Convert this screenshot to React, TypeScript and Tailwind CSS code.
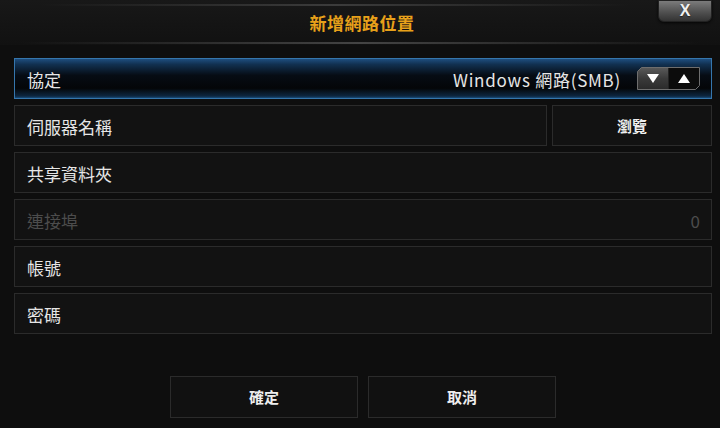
import React from "react";

const font = { fontFamily: '"Noto Sans CJK TC", "Noto Sans", sans-serif' };

function Spinner() {
  return (
    <svg width="63" height="23" viewBox="0 0 63 23">
      <defs>
        <linearGradient id="lg" x1="0" y1="0" x2="0" y2="1">
          <stop offset="0" stopColor="#5a5a5a" />
          <stop offset="0.5" stopColor="#3a3a3a" />
          <stop offset="1" stopColor="#2a2a2a" />
        </linearGradient>
      </defs>
      <polygon points="4.5,0.5 31.5,0.5 31.5,22.5 0.5,22.5 0.5,4.5" fill="url(#lg)" />
      <polygon points="31.5,0.5 62.5,0.5 62.5,18.5 58.5,22.5 31.5,22.5" fill="#0c0c0c" />
      <polygon
        points="4.5,0.5 62.5,0.5 62.5,18.5 58.5,22.5 0.5,22.5 0.5,4.5"
        fill="none"
        stroke="#6e6e6e"
        strokeWidth="1"
      />
      <line x1="31.5" y1="1" x2="31.5" y2="22" stroke="#222" />
      <polygon points="10,7 22,7 16,16" fill="#ffffff" />
      <polygon points="41,16 53,16 47,7" fill="#ffffff" />
    </svg>
  );
}

function Row({ children, className = "" }: { children: React.ReactNode; className?: string }) {
  return (
    <div
      className={
        "h-[41px] border border-[#2b2b2b] bg-[#121212] flex items-center px-[12px] " + className
      }
    >
      {children}
    </div>
  );
}

export default function App() {
  return (
    <div className="w-[720px] h-[428px] bg-[#0e0e0e] flex flex-col overflow-hidden" style={font}>
      {/* header */}
      <div className="relative h-[45px] bg-gradient-to-b from-[#181818] to-[#111111] flex items-center justify-center">
        <div className="absolute left-[40px] right-[90px] top-[4px] h-[2px] bg-gradient-to-r from-transparent via-[#3c3c3c] to-transparent" />
        <div className="absolute left-[20px] right-[20px] top-[42px] h-[2px] bg-gradient-to-r from-transparent via-[#444444] to-transparent" />
        <div className="text-[17px] font-bold text-[#e8a11a] tracking-[0.5px] pl-[4px] pt-[1px]">
          新增網路位置
        </div>
        <div className="absolute left-[658px] top-[0px] w-[54px] h-[22px] rounded-b-[6px] bg-gradient-to-b from-[#7c7c7c] via-[#555555] to-[#333333] border border-[#222] shadow-[0_1px_3px_rgba(0,0,0,0.8)] flex items-center justify-center">
          <span
            className="text-[16px] font-bold text-[#f0f0f0] leading-none"
            style={{ fontFamily: '"Liberation Sans", sans-serif', textShadow: "0 1px 1px #222" }}
          >
            X
          </span>
        </div>
      </div>

      {/* rows */}
      <div className="flex flex-col gap-[6px] pl-[14px] pr-[8px] pt-[13px]">
        <div className="relative h-[41px] border border-[#3576ad] flex items-center px-[12px] bg-[linear-gradient(to_bottom,#1e4e7e_0%,#113050_14%,#060c14_42%,#040608_75%,#0d2640_95%,#184a78_100%)]">
          <span className="text-[17px] text-[#e6e6e6] pt-[2px]">協定</span>
          <div className="ml-auto flex items-center gap-[16px]">
            <span className="text-[17px] text-[#e6e6e6] tracking-[0.75px] pt-[2px]">Windows 網路(SMB)</span>
            <div className="mr-[-1px]">
              <Spinner />
            </div>
          </div>
        </div>

        <div className="flex gap-[5px] h-[41px]">
          <Row className="flex-1">
            <span className="text-[17px] text-[#e6e6e6] pt-[2px]">伺服器名稱</span>
          </Row>
          <div className="w-[160px] h-[41px] border border-[#2b2b2b] bg-[#121212] flex items-center justify-center">
            <span className="text-[15px] font-bold text-[#eeeeee] pt-[1px]">瀏覽</span>
          </div>
        </div>

        <Row>
          <span className="text-[17px] text-[#e6e6e6] pt-[2px]">共享資料夾</span>
        </Row>

        <Row>
          <span className="text-[17px] text-[#4c4c4c] pt-[2px]">連接埠</span>
          <span className="ml-auto text-[17px] text-[#4c4c4c] mr-[-1px] pt-[2px]">0</span>
        </Row>

        <Row>
          <span className="text-[17px] text-[#e6e6e6] pt-[2px]">帳號</span>
        </Row>

        <Row>
          <span className="text-[17px] text-[#e6e6e6] pt-[2px]">密碼</span>
        </Row>
      </div>

      {/* buttons */}
      <div className="flex justify-center gap-[10px] pt-[42px] pl-[6px]">
        <div className="w-[188px] h-[42px] border border-[#2b2b2b] bg-[#111111] flex items-center justify-center">
          <span className="text-[15px] font-bold text-[#eeeeee]">確定</span>
        </div>
        <div className="w-[188px] h-[42px] border border-[#2b2b2b] bg-[#111111] flex items-center justify-center">
          <span className="text-[15px] font-bold text-[#eeeeee]">取消</span>
        </div>
      </div>
    </div>
  );
}
